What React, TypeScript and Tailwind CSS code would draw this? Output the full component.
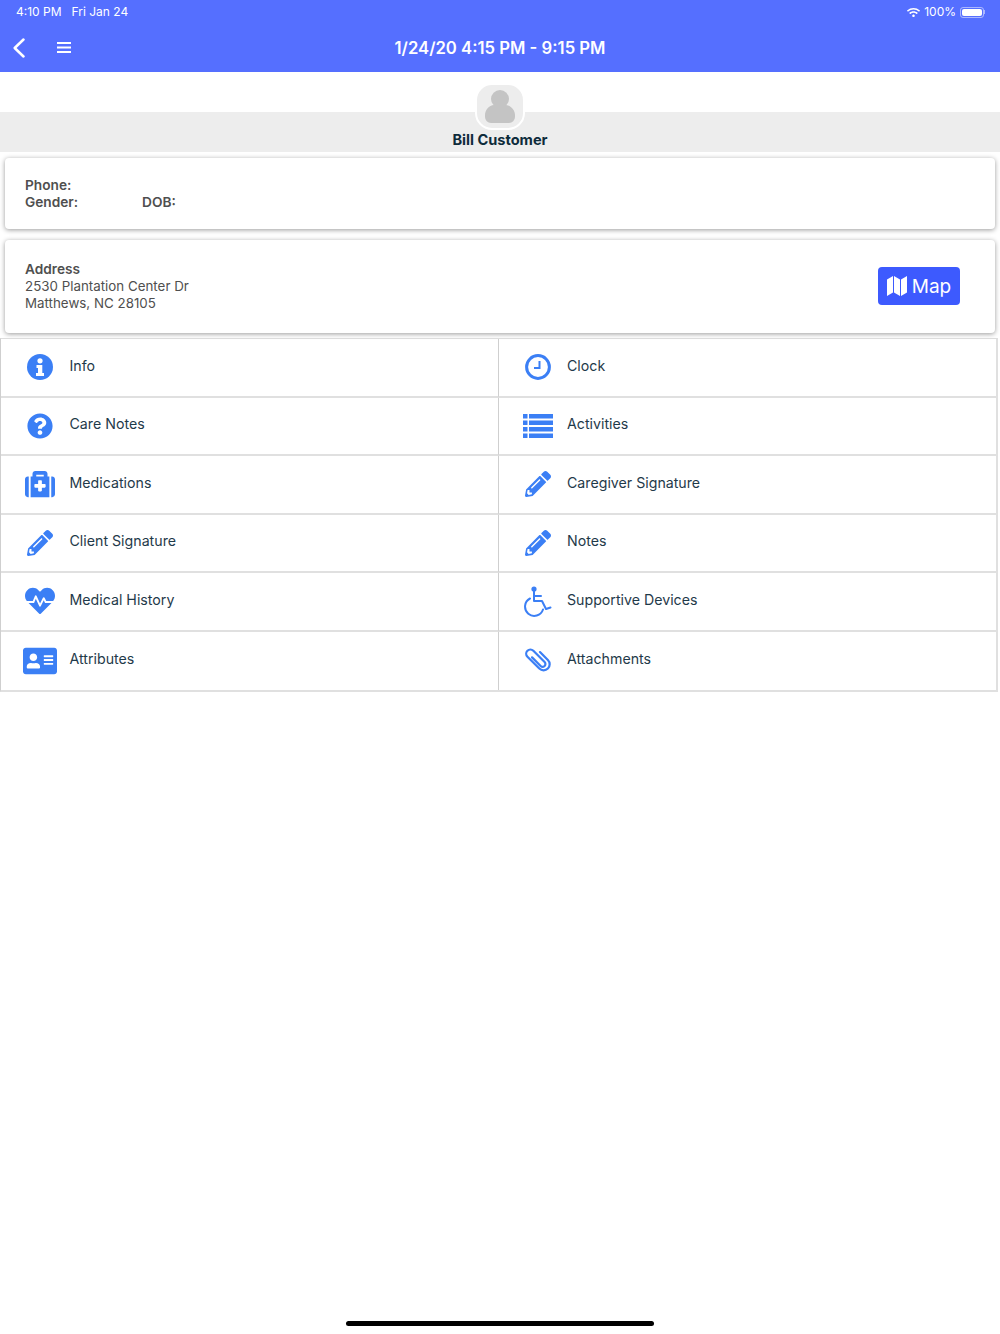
import { FaQuestionCircle, FaMedkit, FaPencilAlt, FaHeartbeat, FaAddressCard, FaWifi } from "react-icons/fa"
import type { ReactNode } from "react"

const InfoIcon = () => (
    <svg width="26" height="26" viewBox="0 0 26 26">
        <circle cx="13" cy="13" r="13" fill="#3b7ff5" />
        <circle cx="13" cy="6.8" r="2.6" fill="#fff" />
        <path d="M9.5 11h5.8v8h1.7v3H9v-3h2v-5H9.500z" fill="#fff" />
    </svg>
)

const ClockIcon = () => (
    <svg width="26" height="26" viewBox="0 0 26 26" fill="none" stroke="#3b7ff5">
        <circle cx="13" cy="13" r="11.4" strokeWidth="3" />
        <path d="M14.500 7v7H9" strokeWidth="2" />
    </svg>
)

const ListIcon = () => (
    <svg width="30" height="24" viewBox="0 0 30 24" fill="#3b7ff5">
        {[0, 6.500, 13, 19.500].map(y => (
            <g key={y}>
                <rect x="0" y={y} width="4.500" height="4.500" />
                <rect x="6" y={y} width="24" height="4.500" />
            </g>
        ))}
    </svg>
)

const WheelchairIcon = () => (
    <svg width="29" height="31" viewBox="0 0 29 31" fill="none" stroke="#3b7ff5" strokeWidth="2" strokeLinecap="round" strokeLinejoin="round">
        <circle cx="11" cy="3" r="2.600" fill="#3b7ff5" stroke="none" />
        <path d="M11 5v10h8l4 8 4.500-1.500" />
        <path d="M11 10h7" />
        <path d="M7 12.500a9.200 9.200 0 1 0 13 11" />
    </svg>
)

const ClipIcon = () => (
    <svg width="28" height="28" viewBox="-15 -15 30 30" fill="none" stroke="#3b7ff5" strokeWidth="2.400" strokeLinecap="round" className="-mt-[3px] -ml-px">
        <path transform="rotate(-45)" d="M-2.500 -5V8A3 3 0 0 0 3.500 8V-9A4.500 4.500 0 0 0 -5.500 -9V9A6.500 6.500 0 0 0 7.500 9V-3" />
    </svg>
)

const MapIcon = () => (
    <svg width="20" height="20" viewBox="0 0 20 20" fill="#fff">
        <path d="M0 3.500L6 0v16.500L0 20z" />
        <path d="M7 0l6 3.500V20l-6-3.500z" />
        <path d="M14 3.500L20 0v16.500L14 20z" />
    </svg>
)

const PersonIcon = () => (
    <svg width="30" height="34" viewBox="0 0 30 34" fill="#c4c4c4">
        <circle cx="15" cy="9" r="9" />
        <path d="M0 27v-2C0 20 4 15.500 9 15q6 4 12 0c5 .500 9 5 9 10v2a6 6 0 0 1-6 6H6a6 6 0 0 1-6-6z" />
    </svg>
)

const items: { label: string; icon: ReactNode }[] = [
    { label: "Info", icon: <InfoIcon /> },
    { label: "Clock", icon: <ClockIcon /> },
    { label: "Care Notes", icon: <FaQuestionCircle size={26} /> },
    { label: "Activities", icon: <ListIcon /> },
    { label: "Medications", icon: <FaMedkit size={30} /> },
    { label: "Caregiver Signature", icon: <FaPencilAlt size={26} /> },
    { label: "Client Signature", icon: <FaPencilAlt size={26} /> },
    { label: "Notes", icon: <FaPencilAlt size={26} /> },
    { label: "Medical History", icon: <FaHeartbeat size={30} /> },
    { label: "Supportive Devices", icon: <WheelchairIcon /> },
    { label: "Attributes", icon: <FaAddressCard size={34} /> },
    { label: "Attachments", icon: <ClipIcon /> },
]

export default function App() {
    return (
        <div className="h-[1334px] flex flex-col bg-white font-['Inter',sans-serif] overflow-hidden">
            <header className="h-[72px] shrink-0 bg-[#556fff] text-white flex flex-col">
                <div className="h-6 flex items-center justify-between pl-4 pr-[15px] text-xs">
                    <div className="flex gap-[10px]">
                        <span>4:10 PM</span>
                        <span>Fri Jan 24</span>
                    </div>
                    <div className="flex items-center gap-1">
                        <FaWifi size={13} />
                        <span>100%</span>
                        <div className="flex items-center">
                            <div className="w-[24px] h-[11px] rounded-[3px] border border-white/50 p-px">
                                <div className="h-full rounded-[2px] bg-white" />
                            </div>
                            <div className="w-px h-1 bg-white/50" />
                        </div>
                    </div>
                </div>
                <div className="grow flex items-center relative">
                    <div className="flex items-center gap-[32px] pl-[13px] -mt-[1px]">
                        <svg width="12" height="20" viewBox="0 0 12 20" fill="none" stroke="#fff" strokeWidth="2.500" strokeLinecap="round" strokeLinejoin="round">
                            <path d="M10.500 1.500L1.700 10l8.800 8.500" />
                        </svg>
                        <svg width="14" height="11" viewBox="0 0 14 11" fill="#fff">
                            <rect width="14" height="2" />
                            <rect y="4.500" width="14" height="2" />
                            <rect y="9" width="14" height="2" />
                        </svg>
                    </div>
                    <h1 className="absolute inset-x-0 mt-[2px] text-center text-[16.7px] font-semibold">1/24/20 4:15 PM - 9:15 PM</h1>
                </div>
            </header>

            <section className="relative shrink-0 pt-10">
                <div className="absolute left-1/2 top-[11px] -translate-x-1/2 w-[50px] h-[47px] rounded-[17px] bg-[#ededed] border-2 border-white flex items-center justify-center">
                    <PersonIcon />
                </div>
                <div className="h-10 bg-[#ededed] flex items-end justify-center pb-[2px] text-[14.6px] leading-[20px] font-bold text-[#0e2b3b]">Bill Customer</div>
            </section>

            <div className="px-[5px] pt-[6px] flex flex-col gap-[11px] text-[13.35px] leading-[17px] text-[#4f4f4f] shrink-0">
                <div className="h-[71px] bg-white rounded-sm shadow-[0_1px_5px_rgba(0,0,0,0.4)] pl-5 flex flex-col justify-center font-semibold text-[13.7px]">
                    <div>Phone:</div>
                    <div className="flex">
                        <span className="w-[117px]">Gender:</span>
                        <span>DOB:</span>
                    </div>
                </div>
                <div className="h-[93px] bg-white rounded-sm shadow-[0_1px_5px_rgba(0,0,0,0.4)] pl-5 pr-[35px] flex items-center justify-between">
                    <div>
                        <div className="font-semibold text-[13.7px]">Address</div>
                        <div>2530 Plantation Center Dr</div>
                        <div>Matthews, NC 28105</div>
                    </div>
                    <button className="w-[82px] h-[38px] -mt-[1px] rounded-[4px] bg-[#3d5afe] text-white text-[19px] flex items-center justify-center gap-[5px]">
                        <MapIcon />
                        Map
                    </button>
                </div>
            </div>

            <div className="mt-[5px] mr-[2px] shrink-0 grid grid-cols-2 border-t border-b-2 border-l border-r-2 border-t-[#dcdcdc] border-b-[#e0e0e0] border-l-[#cfcfcf] border-r-[#e0e0e0]">
                {items.map((item, index) => (
                    <div key={item.label} className={`h-[58.5px] flex items-center ${index < 10 ? "border-b-2 border-b-[#e0e0e0]" : ""} ${index % 2 === 0 ? "border-r border-r-[#cfcfcf]" : ""}`}>
                        <div className="ml-[14px] mr-[4.5px] w-[50px] shrink-0 flex justify-center text-[#3b7ff5]">{item.icon}</div>
                        <span className="text-[14.2px] text-[#1f3a4a] -mt-1">{item.label}</span>
                    </div>
                ))}
            </div>

            <div className="mt-auto mb-2 mx-auto w-[308px] h-[5px] shrink-0 rounded-full bg-black" />
        </div>
    )
}
